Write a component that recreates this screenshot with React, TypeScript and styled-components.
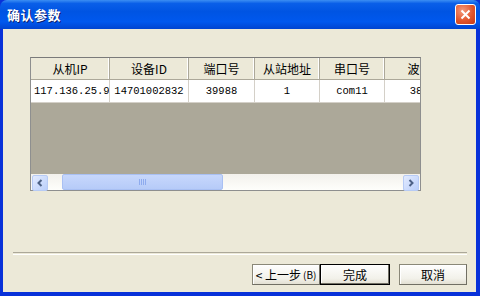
import React from "react";
import styled, { createGlobalStyle } from "styled-components";

const Global = createGlobalStyle`
  html, body { margin: 0; padding: 0; background: #ece9d8; }
  body { font-family: "Noto Sans CJK SC", "Liberation Sans", sans-serif; }
`;

const Frame = styled.div`
  width: 480px;
  height: 296px;
  display: flex;
  flex-direction: column;
  overflow: hidden;
  background: #0831d9;
`;

const TitleBar = styled.div`
  height: 29px;
  flex: none;
  display: flex;
  align-items: center;
  justify-content: space-between;
  padding: 0 4px 0 7px;
  border-radius: 7px 7px 0 0;
  background: linear-gradient(
    #3c8ef3 0%,
    #0a5fe8 12%,
    #0054e3 40%,
    #0058ee 75%,
    #0044d0 100%
  );
`;

const Title = styled.span`
  color: #fff;
  font-size: 13px;
  font-weight: bold;
  text-shadow: 1px 1px 0 #0a1e6e;
  letter-spacing: 0.5px;
`;

const CloseButton = styled.div`
  width: 19px;
  height: 19px;
  border: 1px solid #fff;
  border-radius: 3px;
  display: flex;
  align-items: center;
  justify-content: center;
  background: radial-gradient(circle at 35% 30%, #f49a7c 0%, #e2562d 55%, #c43a14 100%);
`;

const Body = styled.div`
  flex: 1;
  display: flex;
  flex-direction: column;
  margin: 0 4px 4px 3px;
  background: #ece9d8;
`;

const ListPanel = styled.div`
  margin: 28px 0 0 27px;
  width: 389px;
  height: 132px;
  border: 1px solid #8e8f8f;
  border-top-color: #7a7a7a;
  display: flex;
  flex-direction: column;
  background: #aca899;
`;

const GridArea = styled.div`
  flex: 1;
  overflow: hidden;
`;

const Row = styled.div`
  display: flex;
  width: 440px;
`;

const HeadCell = styled.div<{ $w: number }>`
  width: ${(p) => p.$w}px;
  flex: none;
  height: 22px;
  box-sizing: border-box;
  display: flex;
  align-items: center;
  justify-content: center;
  font-size: 12px;
  color: #000;
  background: #ece9d8;
  border-right: 1px solid #aca899;
  border-bottom: 1px solid #aca899;
  box-shadow: inset -1px 0 0 #fff;
`;

const DataCell = styled.div<{ $w: number; $left?: boolean }>`
  width: ${(p) => p.$w}px;
  flex: none;
  height: 23px;
  box-sizing: border-box;
  display: flex;
  align-items: center;
  justify-content: ${(p) => (p.$left ? "flex-start" : "center")};
  padding-left: ${(p) => (p.$left ? 3 : 0)}px;
  font-family: "Liberation Mono", "Noto Sans CJK SC", monospace;
  font-size: 10.5px;
  color: #000;
  background: #fff;
  border-right: 1px solid #d4d0c8;
  border-bottom: 1px solid #d4d0c8;
  white-space: nowrap;
  overflow: hidden;
`;

const ScrollBar = styled.div`
  height: 16px;
  flex: none;
  display: flex;
  background: linear-gradient(#f3f1ec, #fefefb);
`;

const ArrowBtn = styled.div`
  width: 14px;
  height: 14px;
  margin: 1px 1px;
  border: 1px solid #b7cbf5;
  border-radius: 2px;
  display: flex;
  align-items: center;
  justify-content: center;
  background: linear-gradient(135deg, #e3ebff, #bacffa);
`;

const Track = styled.div`
  flex: 1;
  display: flex;
  align-items: center;
  padding-left: 13px;
`;

const Thumb = styled.div`
  width: 159px;
  height: 14px;
  border: 1px solid #a9c0f3;
  border-radius: 2px;
  display: flex;
  align-items: center;
  justify-content: center;
  background: linear-gradient(#c7d7fc, #b6cbf8);
`;

const Separator = styled.div`
  margin: 61px 9px 0 10px;
  height: 1px;
  border-top: 1px solid #aca899;
  border-bottom: 1px solid #fff;
`;

const ButtonRow = styled.div`
  display: flex;
  justify-content: flex-end;
  padding: 9px 9px 0 0;
`;

const Button = styled.div<{ $def?: boolean; $gap?: number }>`
  width: ${(p) => (p.$def ? 70 : 68)}px;
  height: 21px;
  box-sizing: border-box;
  margin-left: ${(p) => p.$gap ?? 0}px;
  display: flex;
  align-items: center;
  justify-content: center;
  gap: 2px;
  font-size: 12px;
  color: #000;
  white-space: nowrap;
  background: linear-gradient(#fefefe, #f2f1ea 70%, #e3e0d3);
  border: 1px solid ${(p) => (p.$def ? "#000" : "#8a8878")};
  border-right-color: ${(p) => (p.$def ? "#000" : "#716f64")};
  border-bottom-color: ${(p) => (p.$def ? "#000" : "#716f64")};
  box-shadow: ${(p) => (p.$def ? "inset -1px -1px 0 #716f64, inset 1px 1px 0 #fff" : "inset 1px 1px 0 #fff")};
`;

const Mnemonic = styled.span`
  font-size: 10px;
`;

const columns = [
  { title: "从机IP", w: 79, value: "117.136.25.96", left: true },
  { title: "设备ID", w: 79, value: "14701002832" },
  { title: "端口号", w: 66, value: "39988" },
  { title: "从站地址", w: 65, value: "1" },
  { title: "串口号", w: 65, value: "com11" },
  { title: "波特率", w: 82, value: "38400" },
];

const Chevron = ({ dir }: { dir: "left" | "right" }) => (
  <svg width="8" height="8" viewBox="0 0 8 8">
    <path
      d={dir === "left" ? "M5.5 1 L2.5 4 L5.5 7" : "M2.5 1 L5.5 4 L2.5 7"}
      fill="none"
      stroke="#4d6185"
      strokeWidth="2"
    />
  </svg>
);

const Grip = () => (
  <svg width="8" height="6" viewBox="0 0 8 6">
    {[0, 2, 4, 6].map((x) => (
      <line key={x} x1={x + 0.5} y1="0" x2={x + 0.5} y2="6" stroke="#8eabee" strokeWidth="1" />
    ))}
  </svg>
);

export default function App() {
  return (
    <>
      <Global />
      <Frame>
        <TitleBar>
          <Title>确认参数</Title>
          <CloseButton>
            <svg width="11" height="11" viewBox="0 0 11 11">
              <path d="M1.5 1.5 L9.5 9.5 M9.5 1.5 L1.5 9.5" stroke="#fff" strokeWidth="2" />
            </svg>
          </CloseButton>
        </TitleBar>
        <Body>
          <ListPanel>
            <GridArea>
              <Row>
                {columns.map((c) => (
                  <HeadCell key={c.title} $w={c.w}>
                    {c.title}
                  </HeadCell>
                ))}
              </Row>
              <Row>
                {columns.map((c) => (
                  <DataCell key={c.title} $w={c.w} $left={c.left}>
                    {c.value}
                  </DataCell>
                ))}
              </Row>
            </GridArea>
            <ScrollBar>
              <ArrowBtn>
                <Chevron dir="left" />
              </ArrowBtn>
              <Track>
                <Thumb>
                  <Grip />
                </Thumb>
              </Track>
              <ArrowBtn>
                <Chevron dir="right" />
              </ArrowBtn>
            </ScrollBar>
          </ListPanel>
          <Separator />
          <ButtonRow>
            <Button>
              &lt; 上一步<Mnemonic>(B)</Mnemonic>
            </Button>
            <Button $def>完成</Button>
            <Button $gap={9}>取消</Button>
          </ButtonRow>
        </Body>
      </Frame>
    </>
  );
}
